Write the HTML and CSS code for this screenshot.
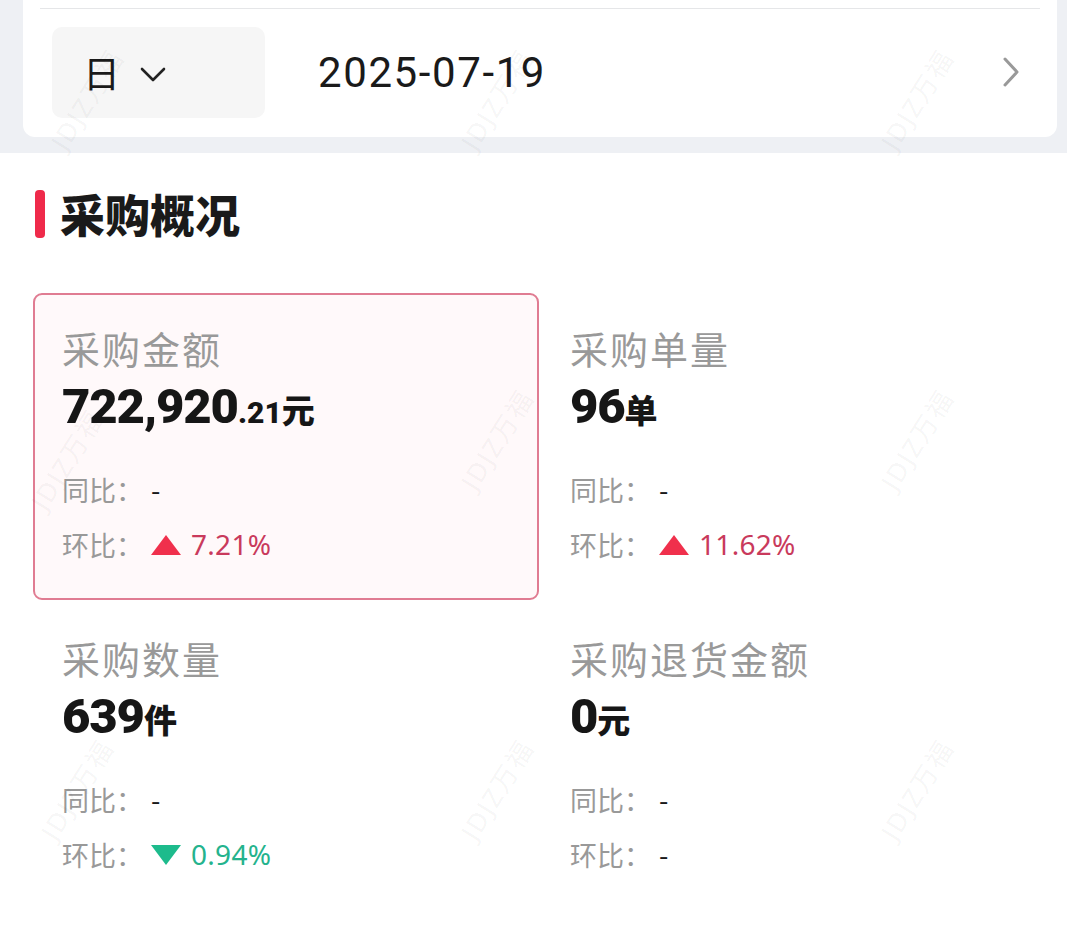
FILE: index.html
```html
<!DOCTYPE html>
<html lang="zh-CN">
<head>
<meta charset="utf-8">
<link rel="stylesheet" href="styles.css">
</head>
<body>
<div class="page">
  <div class="top">
    <div class="card">
      <div class="divider"></div>
      <div class="filter">
        <div class="dropdown">
          <span class="unit">日</span>
          <svg class="chev-down" viewBox="0 0 26 16" width="26" height="16"><path d="M2 2 L13 13 L24 2" fill="none" stroke="#222" stroke-width="2.6" stroke-linecap="round" stroke-linejoin="round"/></svg>
        </div>
        <div class="date">2025-07-19</div>
        <svg class="chev-right" viewBox="0 0 18 32" width="18" height="32"><path d="M3 3 L15 16 L3 29" fill="none" stroke="#999" stroke-width="3" stroke-linecap="round" stroke-linejoin="round"/></svg>
      </div>
    </div>
  </div>

  <section class="overview">
    <h2 class="title"><span class="bar"></span>采购概况</h2>
    <div class="grid">
      <div class="metric active">
        <div class="label">采购金额</div>
        <div class="value"><span class="big">722,920</span><span class="dec">.21</span><span class="unit-s">元</span></div>
        <div class="cmp"><span class="k">同比：</span><span class="v">-</span></div>
        <div class="cmp"><span class="k">环比：</span><span class="up"><i class="tri-up"></i>7.21%</span></div>
      </div>
      <div class="metric">
        <div class="label">采购单量</div>
        <div class="value"><span class="big">96</span><span class="unit-s">单</span></div>
        <div class="cmp"><span class="k">同比：</span><span class="v">-</span></div>
        <div class="cmp"><span class="k">环比：</span><span class="up"><i class="tri-up"></i>11.62%</span></div>
      </div>
      <div class="metric">
        <div class="label">采购数量</div>
        <div class="value"><span class="big">639</span><span class="unit-s">件</span></div>
        <div class="cmp"><span class="k">同比：</span><span class="v">-</span></div>
        <div class="cmp"><span class="k">环比：</span><span class="down"><i class="tri-down"></i>0.94%</span></div>
      </div>
      <div class="metric">
        <div class="label">采购退货金额</div>
        <div class="value"><span class="big">0</span><span class="unit-s">元</span></div>
        <div class="cmp"><span class="k">同比：</span><span class="v">-</span></div>
        <div class="cmp"><span class="k">环比：</span><span class="v">-</span></div>
      </div>
    </div>
  </section>

  <div class="watermarks" aria-hidden="true">
    <span class="wm w1">JDJZ万福</span>
    <span class="wm w2">JDJZ万福</span>
    <span class="wm w3">JDJZ万福</span>
    <span class="wm w4">JDJZ万福</span>
    <span class="wm w5">JDJZ万福</span>
    <span class="wm w6">JDJZ万福</span>
    <span class="wm w7">JDJZ万福</span>
    <span class="wm w8">JDJZ万福</span>
    <span class="wm w9">JDJZ万福</span>
  </div>
</div>
</body>
</html>
```
FILE: styles.css
```css
* { box-sizing: border-box; }
html, body { margin: 0; padding: 0; background: #ffffff; }
body {
  font-family: "Noto Sans CJK SC", "Noto Sans", sans-serif;
  color: #1a1a1a;
}
.page { position: relative; width: 1067px; height: 939px; overflow: hidden; }

.top { background: #eef0f4; padding: 0 10px 16px 23px; }
.card {
  background: #fff;
  height: 137px;
  border-radius: 0 0 12px 12px;
  padding-top: 8px;
}
.divider { height: 1px; background: #e5e6e8; margin: 0 17px 0 17px; }
.filter {
  display: flex;
  align-items: center;
  padding: 18px 37px 0 29px;
}
.dropdown {
  width: 213px;
  height: 91px;
  background: #f6f6f6;
  border-radius: 10px;
  display: flex;
  align-items: center;
  padding-left: 31px;
  gap: 20px;
}
.unit { font-size: 37px; line-height: 1; color: #1a1a1a; }
.chev-down { margin-top: 4px; }
.date {
  margin-left: 53px;
  font-family: "Roboto", "Noto Sans", sans-serif;
  font-size: 42px;
  letter-spacing: 1.6px;
  color: #1a1a1a;
  flex: 1;
}
.chev-right { margin-top: -1px; }

.overview { padding: 37px 0 0 33px; }
.title {
  margin: 0 0 0 2px;
  display: flex;
  align-items: center;
  gap: 15px;
  font-size: 45px;
  font-weight: 900;
  line-height: 48px;
  color: #1a1a1a;
}
.bar { width: 10px; height: 48px; background: #ef2a4a; border-radius: 4px; }

.grid {
  margin-top: 55px;
  display: grid;
  grid-template-columns: 506px 506px;
  grid-auto-rows: 307px;
  column-gap: 2px;
  row-gap: 3px;
}
.metric {
  border: 2px solid transparent;
  border-radius: 9px;
  padding: 27px 0 0 27px;
}
.metric.active { border-color: #e07c92; background: #fff9fa; }
.label { font-size: 38px; line-height: 52px; color: #999999; letter-spacing: 2px; }
.value { margin-top: 4px; line-height: 58px; height: 58px; color: #161616; white-space: nowrap; }
.big { font-family: "Roboto", sans-serif; font-weight: 900; font-size: 49px; letter-spacing: -1.1px; }
.dec { font-family: "Roboto", sans-serif; font-weight: 900; font-size: 30px; }
.unit-s { font-weight: 900; font-size: 33px; }
.cmp { font-size: 27px; line-height: 55px; color: #999; display: flex; align-items: center; }
.value + .cmp { margin-top: 26px; }
.k { width: 89px; }
.v { color: #1a1a1a; }
.up { color: #c93a5c; display: flex; align-items: center; font-family: "Noto Sans", sans-serif; font-size: 28px; letter-spacing: 0.3px; }
.down { color: #24b38d; display: flex; align-items: center; font-family: "Noto Sans", sans-serif; font-size: 28px; letter-spacing: 0.3px; }
.tri-up {
  width: 0; height: 0; margin-right: 10px;
  border-left: 15px solid transparent;
  border-right: 15px solid transparent;
  border-bottom: 20px solid #f0304c;
}
.tri-down {
  width: 0; height: 0; margin-right: 10px;
  border-left: 15px solid transparent;
  border-right: 15px solid transparent;
  border-top: 20px solid #1dbb8c;
}

.watermarks { position: absolute; inset: 0; pointer-events: none; }
.wm {
  position: absolute;
  font-family: "Noto Sans", "Noto Sans CJK SC", sans-serif;
  font-size: 26px;
  color: rgba(0, 0, 0, 0.05);
  transform: rotate(-58deg);
  white-space: nowrap;
  letter-spacing: 2px;
}
.w1 { left: 30px; top: 80px; }
.w2 { left: 440px; top: 80px; }
.w3 { left: 860px; top: 80px; }
.w4 { left: 10px; top: 440px; }
.w5 { left: 440px; top: 420px; }
.w6 { left: 860px; top: 420px; }
.w7 { left: 20px; top: 770px; }
.w8 { left: 440px; top: 770px; }
.w9 { left: 860px; top: 770px; }
```
